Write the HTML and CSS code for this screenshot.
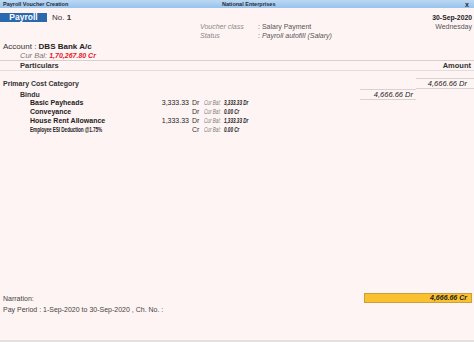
FILE: index.html
```html
<!DOCTYPE html>
<html>
<head>
  <meta charset="utf-8">
  <link rel="stylesheet" href="styles.css">
  <title>Payroll Voucher Creation</title>
</head>
<body>
  <div class="titleBar">
    <span class="screen">Payroll Voucher Creation</span>
    <span class="company">National Enterprises</span>
    <span class="close">x</span>
  </div>

  <div class="topRow">
    <div class="vType"><span class="badge">Payroll</span><span class="vNo">No. <b>1</b></span></div>
    <div class="date">30-Sep-2020</div>
  </div>
  <div class="metaRow">
    <span class="metaLabel">Voucher class</span>
    <span class="metaValue">: Salary Payment</span>
    <span class="day">Wednesday</span>
  </div>
  <div class="metaRow">
    <span class="metaLabel">Status</span>
    <span class="metaValue">: <i>Payroll autofill (Salary)</i></span>
  </div>

  <div class="account">Account : <b>DBS Bank A/c</b></div>
  <div class="curBal"><i>Cur Bal:</i> <b class="red">1,70,267.80 Cr</b></div>

  <div class="colHead">
    <span class="partHead">Particulars</span>
    <span>Amount</span>
  </div>

  <div class="main">
    <div class="catRow">
      <span class="catName">Primary Cost Category</span>
      <span class="catAmt">4,666.66 Dr</span>
    </div>
    <div class="empRow">
      <span class="empName">Bindu</span>
      <span class="empAmt">4,666.66 Dr</span>
    </div>
    <div class="payRow">
      <span class="payName">Basic Payheads</span>
      <span class="amt">3,333.33</span>
      <span class="drcr">Dr</span>
      <span class="bal"><i>Cur Bal:</i> <b>3,333.33 Dr</b></span>
    </div>
    <div class="payRow">
      <span class="payName">Conveyance</span>
      <span class="amt"></span>
      <span class="drcr">Dr</span>
      <span class="bal"><i>Cur Bal:</i> <b>0.00 Cr</b></span>
    </div>
    <div class="payRow">
      <span class="payName">House Rent Allowance</span>
      <span class="amt">1,333.33</span>
      <span class="drcr">Dr</span>
      <span class="bal"><i>Cur Bal:</i> <b>1,333.33 Dr</b></span>
    </div>
    <div class="payRow">
      <span class="payName"><span class="tiny">Employee ESI Deduction @1.75%</span></span>
      <span class="amt"></span>
      <span class="drcr">Cr</span>
      <span class="bal"><i>Cur Bal:</i> <b>0.00 Cr</b></span>
    </div>
  </div>

  <div class="footer">
    <div class="narrRow">
      <span>Narration:</span>
      <span class="total">4,666.66 Cr</span>
    </div>
    <div class="payPeriod">Pay Period : 1-Sep-2020 to 30-Sep-2020 , Ch. No. :</div>
  </div>
</body>
</html>
```

FILE: styles.css
```css
html, body {
  margin: 0;
  padding: 0;
}
body {
  width: 474px;
  height: 342px;
  display: flex;
  flex-direction: column;
  background-color: #fff4f4;
  color: #1c1c1c;
  font-family: "Liberation Sans", Arial, sans-serif;
  font-size: 7px;
  line-height: 9px;
  overflow: hidden;
}
.titleBar {
  height: 8px;
  display: flex;
  align-items: center;
  padding: 0 5px 0 3px;
  background: linear-gradient(to bottom, #bcd8f3 0%, #98c4ec 100%);
  font-size: 5.5px;
  font-weight: bold;
  color: #1f2b3a;
}
.titleBar .screen {
  width: 219px;
}
.titleBar .close {
  margin-left: auto;
  font-size: 7px;
}

/* voucher header */
.topRow {
  display: flex;
  justify-content: space-between;
  margin-top: 4px;
  padding-right: 2px;
}
.vType {
  display: flex;
  align-items: center;
}
.badge {
  display: inline-block;
  width: 47px;
  height: 9px;
  line-height: 9px;
  text-align: center;
  background-color: #2b68ad;
  color: #fff;
  font-weight: bold;
  font-size: 8.5px;
}
.vNo {
  margin-left: 5px;
  font-size: 8px;
  color: #333;
}
.date {
  font-weight: bold;
  font-size: 6.8px;
  line-height: 9px;
  margin-top: 1px;
}
.metaRow {
  display: flex;
  padding-left: 200px;
  padding-right: 2px;
  line-height: 9px;
}
.metaLabel {
  width: 58px;
  font-style: italic;
  color: #888;
}
.metaValue {
  flex: 1;
  color: #555;
}
.day {
  color: #555;
  font-size: 7px;
}

.account {
  margin-top: 2px;
  padding-left: 3px;
  font-size: 8px;
  color: #333;
}
.account b {
  color: #222;
}
.curBal {
  padding-left: 20px;
  font-size: 7.5px;
}
.curBal i {
  color: #777;
}
.red {
  color: #e0202a;
  font-style: italic;
  font-size: 7px;
}

.colHead {
  display: flex;
  justify-content: space-between;
  border-top: 1px solid #d6d0d0;
  border-bottom: 1px solid #e2dcdc;
  padding: 0 3px 0 20px;
  font-weight: bold;
  font-size: 7.5px;
  color: #333;
}

/* ledger rows */
.main {
  flex: 1;
  padding-top: 7px;
}
.catRow, .empRow {
  display: flex;
  align-items: center;
  font-weight: bold;
}
.catName {
  flex: 1;
  padding-left: 3px;
  color: #333;
}
.catAmt {
  width: 51px;
  padding-right: 7px;
  text-align: right;
  border-top: 1px solid #d8d2d2;
  border-bottom: 1px solid #d8d2d2;
  font-style: italic;
  font-weight: normal;
  font-size: 7.5px;
}
.empRow {
  margin-bottom: -2px;
}
.empName {
  flex: 1;
  padding-left: 20px;
  color: #333;
}
.empAmt {
  width: 53px;
  padding-right: 3px;
  margin-right: 58px;
  text-align: right;
  border-top: 1px solid #d8d2d2;
  border-bottom: 1px solid #d8d2d2;
  font-style: italic;
  font-weight: normal;
  font-size: 7.5px;
}
.payRow {
  display: flex;
  padding-left: 30px;
  line-height: 9px;
  white-space: nowrap;
}
.payName {
  width: 128px;
  font-weight: bold;
  color: #222;
}
.tiny {
  display: inline-block;
  font-size: 6.5px;
  transform: scaleX(0.72);
  transform-origin: left center;
  letter-spacing: -0.1px;
}
.amt {
  width: 31px;
  text-align: right;
  color: #222;
}
.drcr {
  width: 12px;
  padding-left: 3px;
  color: #333;
}
.bal {
  display: inline-block;
  transform: scaleX(0.66);
  transform-origin: left center;
}
.bal i {
  color: #777;
  margin-right: 3px;
}
.bal b {
  font-style: italic;
  color: #222;
}

/* footer */
.footer {
  padding-bottom: 26px;
  border-bottom: 2px solid #e2e0e0;
  color: #444;
  font-size: 7px;
}
.narrRow {
  display: flex;
  justify-content: space-between;
  align-items: center;
  padding-left: 3px;
  padding-right: 2px;
}
.total {
  width: 102px;
  height: 8px;
  line-height: 8px;
  padding-right: 4px;
  text-align: right;
  background-color: #fbc02d;
  border: 1px solid #c8a040;
  font-weight: bold;
  font-style: italic;
  color: #222;
}
.payPeriod {
  padding-left: 3px;
  margin-top: 2px;
}
```
